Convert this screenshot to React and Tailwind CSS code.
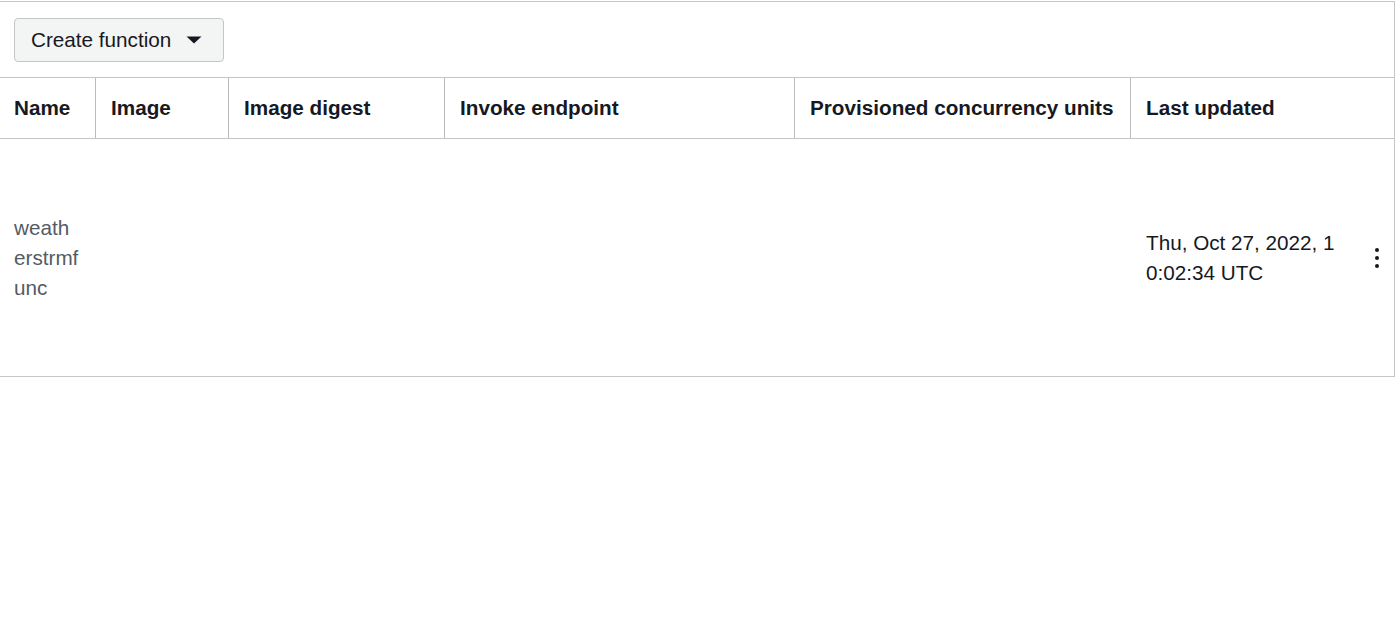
import React from 'react';

const columns = [
  { key: 'name', label: 'Name' },
  { key: 'image', label: 'Image' },
  { key: 'digest', label: 'Image digest' },
  { key: 'endpoint', label: 'Invoke endpoint' },
  { key: 'units', label: 'Provisioned concurrency units' },
  { key: 'updated', label: 'Last updated' },
];

const gridCols = 'grid grid-cols-[95px_133px_216px_350px_336px_1fr]';

const Caret = () => (
  <svg width="16" height="8" viewBox="0 0 16 8" className="ml-[15px]">
    <path d="M0.5 0.5 L15.5 0.5 L8 7.5 Z" fill="#16191f" />
  </svg>
);

const Kebab = () => (
  <button className="flex flex-col items-center gap-[4px] px-1 py-1">
    <span className="w-[4px] h-[4px] rounded-full bg-[#16191f]" />
    <span className="w-[4px] h-[4px] rounded-full bg-[#16191f]" />
    <span className="w-[4px] h-[4px] rounded-full bg-[#16191f]" />
  </button>
);

export default function App() {
  return (
    <div className="w-[1400px] h-[642px] bg-white font-['Liberation_Sans',Arial,sans-serif] text-[20.7px] text-[#16191f]">
      <div className="w-[1395px] mt-px border-t border-r border-b border-[#c6c6c6]">
        {/* ── toolbar ── */}
        <div className="pt-4 pb-[15px] pl-[14px]">
          <button className="h-[44px] w-[210px] flex items-center pl-4 rounded-[4px] border border-[#c4c7c9] bg-[#f3f4f4] text-[20.7px] leading-none text-[#16191f]">
            Create function
            <Caret />
          </button>
        </div>

        {/* ── header ── */}
        <div className={`${gridCols} h-[62px] border-t border-b border-[#c4c4c4]`}>
          {columns.map((c, i) => (
            <div
              key={c.key}
              className={`flex items-center font-bold whitespace-nowrap ${
                i === 0 ? 'pl-[14px]' : 'pl-[15px] border-l border-[#bcbcbc]'
              }`}
            >
              {c.label}
            </div>
          ))}
        </div>

        {/* ── row ── */}
        <div className={`${gridCols} h-[237px] items-center`}>
          <div className="pl-[14px]">
            <div className="w-[65.5px] break-all leading-[30px] text-[#545b64]">weatherstrmfunc</div>
          </div>
          <div />
          <div />
          <div />
          <div />
          <div className="flex items-center pl-[16px]">
            <div className="w-[194px] break-all leading-[30px] text-[#16191f]">Thu, Oct 27, 2022, 10:02:34 UTC</div>
            <div className="ml-auto mr-[11px]">
              <Kebab />
            </div>
          </div>
        </div>
      </div>
    </div>
  );
}
